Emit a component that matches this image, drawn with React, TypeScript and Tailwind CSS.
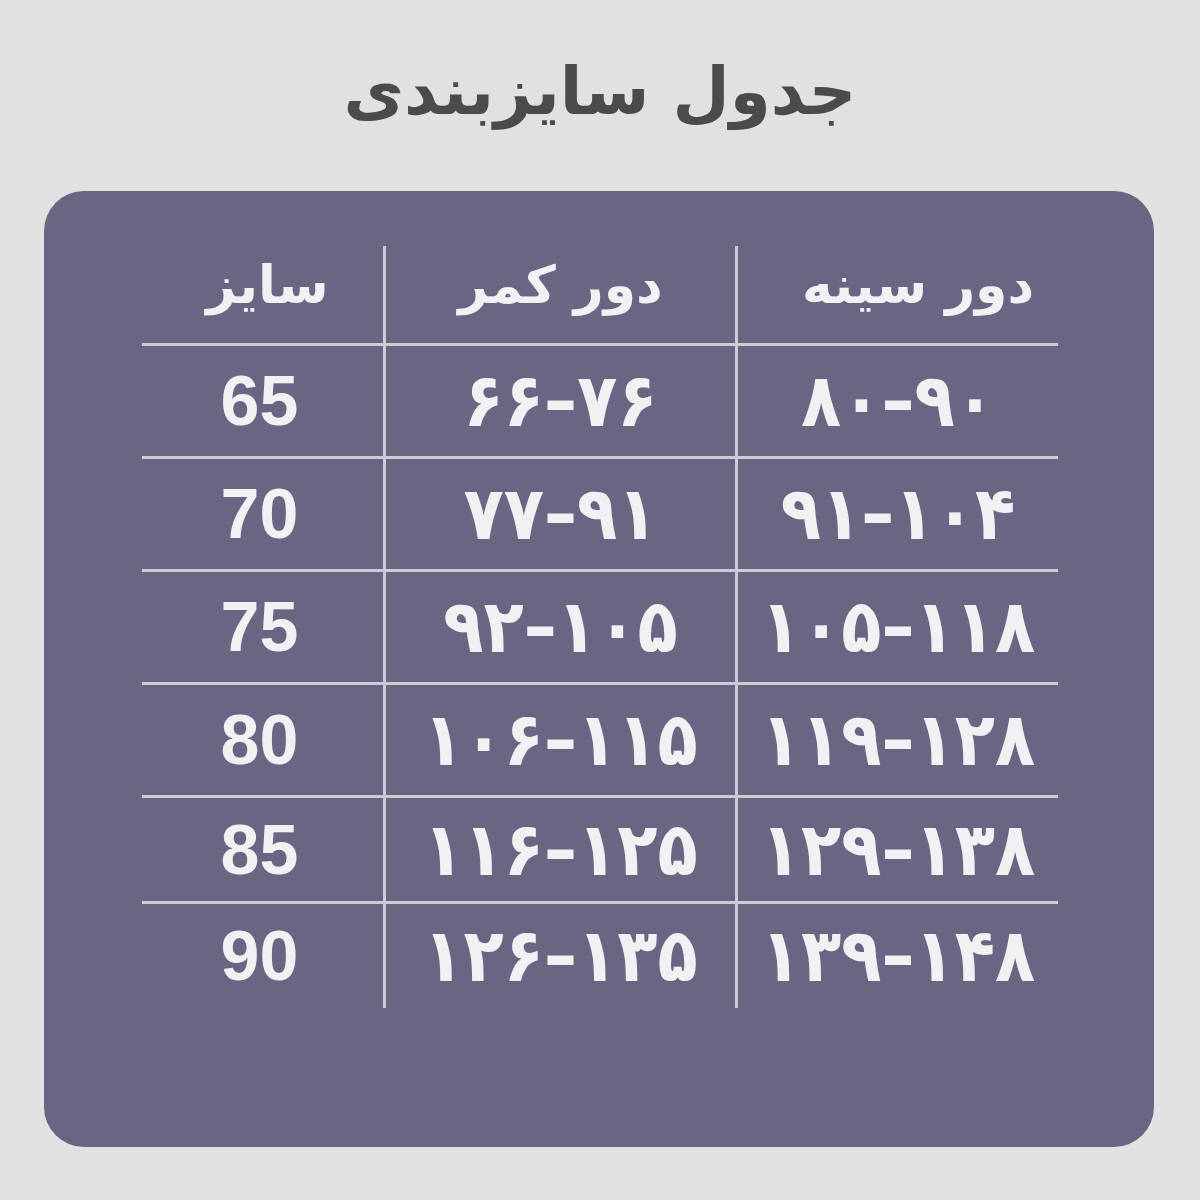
const rows = [
  { size: '65', waist: '۶۶–۷۶', chest: '۸۰–۹۰' },
  { size: '70', waist: '۷۷–۹۱', chest: '۹۱–۱۰۴' },
  { size: '75', waist: '۹۲–۱۰۵', chest: '۱۰۵–۱۱۸' },
  { size: '80', waist: '۱۰۶–۱۱۵', chest: '۱۱۹–۱۲۸' },
  { size: '85', waist: '۱۱۶–۱۲۵', chest: '۱۲۹–۱۳۸' },
  { size: '90', waist: '۱۲۶–۱۳۵', chest: '۱۳۹–۱۴۸' },
];

const fa = { fontFamily: '"DejaVu Sans", "Noto Sans", sans-serif' };

export default function App() {
  return (
    <div className="w-[1200px] h-[1200px] bg-[#e1e1e1] flex flex-col items-center">
      {/* Title */}
      <h1
        dir="rtl"
        className="h-[191px] flex items-center justify-center pb-[8px] text-[66px] font-bold text-[#4b4b4b]"
        style={fa}
      >
        جدول سایزبندی
      </h1>

      {/* Card */}
      <div className="w-[1110px] h-[956px] ml-[-2px] bg-[#6b6584] rounded-[40px] pt-[55px] pl-[98px]">
        <div className="w-[916px] text-[#f1f1f3]">
          {/* Header */}
          <div className="grid grid-cols-[241px_352px_323px] h-[100px] border-b-[3px] border-[#cdcbd4]" dir="ltr">
            <div className="flex items-center justify-center pb-[22px] pl-[10px] text-[52px] font-bold" style={fa}>
              سایز
            </div>
            <div className="flex items-center justify-center pb-[22px] border-l-[3px] border-[#cdcbd4] text-[52px] font-bold" style={fa}>
              دور کمر
            </div>
            <div className="flex items-center justify-center pb-[22px] pl-[40px] border-l-[3px] border-[#cdcbd4] text-[52px] font-bold" style={fa}>
              دور سینه
            </div>
          </div>

          {/* Rows */}
          {rows.map((r, i) => (
            <div
              key={r.size}
              className={
                i === rows.length - 1
                  ? 'grid grid-cols-[241px_352px_323px] h-[104px]'
                  : i === rows.length - 2
                  ? 'grid grid-cols-[241px_352px_323px] h-[106px] border-b-[3px] border-[#cdcbd4]'
                  : 'grid grid-cols-[241px_352px_323px] h-[113px] border-b-[3px] border-[#cdcbd4]'
              }
            >
              <div
                className="flex items-center justify-center pr-[6px] text-[70px] font-bold leading-none"
                style={{ fontFamily: '"Liberation Sans", Arial, sans-serif' }}
              >
                {r.size}
              </div>
              <div className="flex items-center justify-center border-l-[3px] border-[#cdcbd4]">
                <span dir="ltr" className="inline-block scale-y-[1.12] text-[66px] font-bold leading-none" style={fa}>
                  {r.waist}
                </span>
              </div>
              <div className="flex items-center justify-center border-l-[3px] border-[#cdcbd4]">
                <span dir="ltr" className="inline-block scale-y-[1.12] text-[66px] font-bold leading-none" style={fa}>
                  {r.chest}
                </span>
              </div>
            </div>
          ))}
        </div>
      </div>
    </div>
  );
}
